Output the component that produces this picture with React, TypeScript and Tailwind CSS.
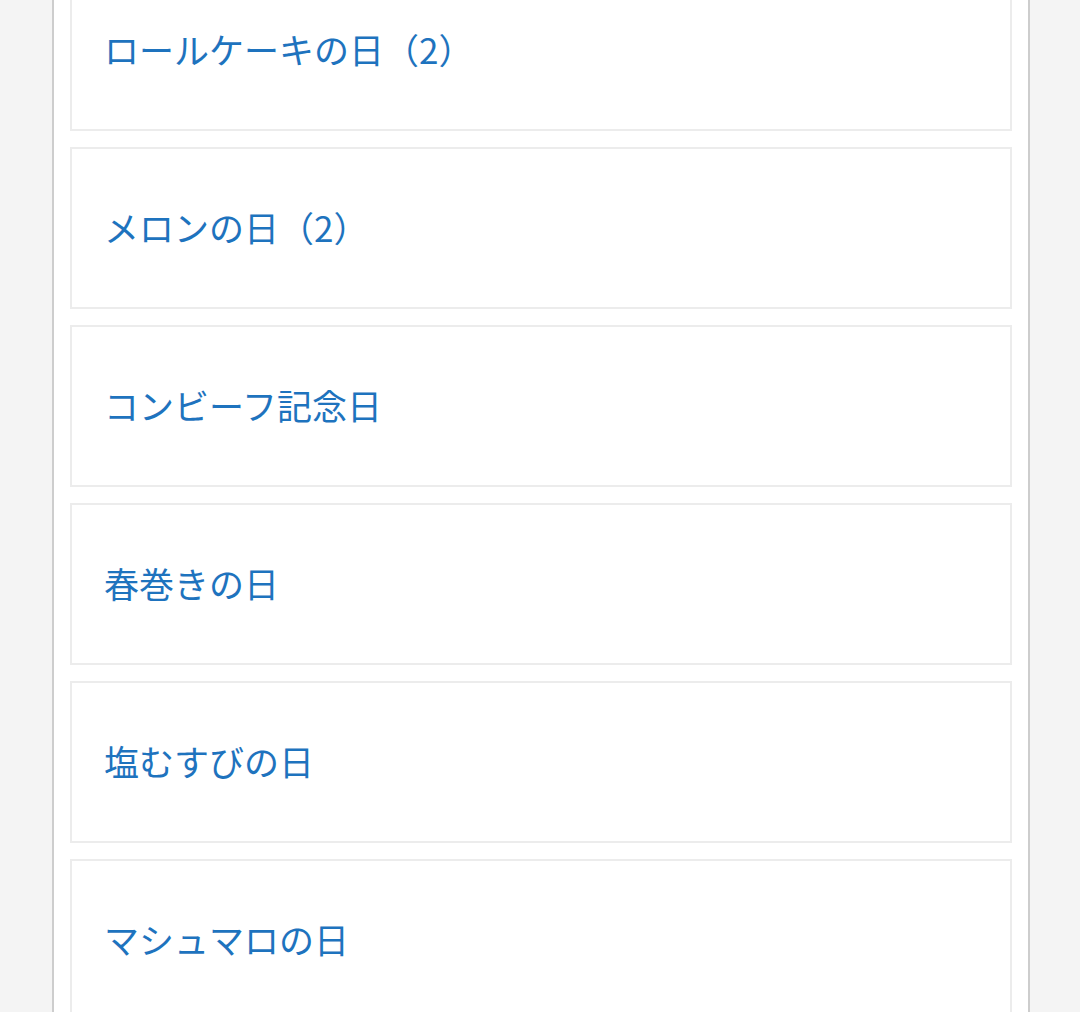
import React from "react";

const items = [
  "ロールケーキの日（2）",
  "メロンの日（2）",
  "コンビーフ記念日",
  "春巻きの日",
  "塩むすびの日",
  "マシュマロの日",
];

export default function App() {
  return (
    <div
      className="h-[1012px] overflow-hidden bg-[#f4f4f4]"
      style={{ fontFamily: '"Noto Sans CJK JP", "Noto Sans", sans-serif' }}
    >
      <div className="ml-[52px] w-[978px] h-full flex flex-col border-x-2 border-[#cdcdcd] bg-white px-4">
        <div className="-mt-[31px] flex flex-col gap-4">
          {items.map((t) => (
            <div
              key={t}
              className="h-[162px] shrink-0 border-2 border-[#ececec] flex items-center pl-[32px] pb-1"
            >
              <span className="text-[35px] leading-none text-[#1e73be]">{t}</span>
            </div>
          ))}
        </div>
      </div>
    </div>
  );
}
